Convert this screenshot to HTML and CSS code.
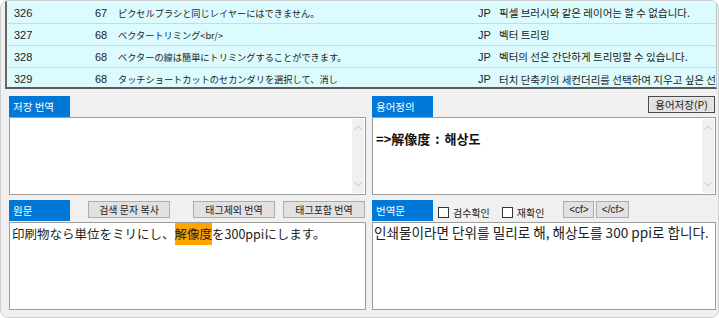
FILE: index.html
```html
<!DOCTYPE html>
<html>
	<head>
		<meta charset="UTF-8">
		<title>번역 편집기</title>
		<link rel="stylesheet" href="styles.css">
	</head>
	<body>
		<div class="window">
			<div class="seg-list">
				<div class="seg-row">
					<span class="c-no">326</span><span class="c-len">67</span>
					<span class="c-ja">ピクセルブラシと同じレイヤーにはできません。</span><span class="c-gap"></span>
					<span class="c-lang">JP</span><span class="c-ko">픽셀 브러시와 같은 레이어는 할 수 없습니다.</span>
				</div>
				<div class="seg-row">
					<span class="c-no">327</span><span class="c-len">68</span>
					<span class="c-ja">ベクタートリミング&lt;br/&gt;</span><span class="c-gap"></span>
					<span class="c-lang">JP</span><span class="c-ko">벡터 트리밍</span>
				</div>
				<div class="seg-row">
					<span class="c-no">328</span><span class="c-len">68</span>
					<span class="c-ja">ベクターの線は簡単にトリミングすることができます。</span><span class="c-gap"></span>
					<span class="c-lang">JP</span><span class="c-ko">벡터의 선은 간단하게 트리밍할 수 있습니다.</span>
				</div>
				<div class="seg-row last">
					<span class="c-no">329</span><span class="c-len">68</span>
					<span class="c-ja">タッチショートカットのセカンダリを選択して、消し</span><span class="c-gap"></span>
					<span class="c-lang">JP</span><span class="c-ko">터치 단축키의 세컨더리를 선택하여 지우고 싶은 선</span>
				</div>
			</div>

			<div class="panels">
				<!-- 저장 번역 -->
				<div class="panel">
					<div class="panel-head">
						<span class="tab">저장 번역</span>
					</div>
					<div class="box box-mid">
						<div class="box-text"></div>
						<div class="vscroll">
							<svg width="8" height="5" viewBox="0 0 8 5"><polyline points="0.5,4.5 4,1 7.5,4.5" fill="none" stroke="#c2c2c2" stroke-width="1"/></svg>
							<svg width="8" height="5" viewBox="0 0 8 5"><polyline points="0.5,0.5 4,4 7.5,0.5" fill="none" stroke="#c2c2c2" stroke-width="1"/></svg>
						</div>
					</div>
				</div>

				<!-- 용어정의 -->
				<div class="panel">
					<div class="panel-head">
						<span class="tab">용어정의</span>
						<button class="btn btn-default">용어저장(P)</button>
					</div>
					<div class="box box-mid">
						<div class="box-text term">=&gt;解像度 : 해상도</div>
						<div class="vscroll">
							<svg width="8" height="5" viewBox="0 0 8 5"><polyline points="0.5,4.5 4,1 7.5,4.5" fill="none" stroke="#c2c2c2" stroke-width="1"/></svg>
							<svg width="8" height="5" viewBox="0 0 8 5"><polyline points="0.5,0.5 4,4 7.5,0.5" fill="none" stroke="#c2c2c2" stroke-width="1"/></svg>
						</div>
					</div>
				</div>

				<!-- 원문 -->
				<div class="panel">
					<div class="panel-head head-low">
						<span class="tab">원문</span>
						<button class="btn btn-copy">검색 문자 복사</button>
						<button class="btn btn-notag">태그제외 번역</button>
						<button class="btn btn-tag">태그포함 번역</button>
					</div>
					<div class="box box-low">
						<div class="box-text src">印刷物なら単位をミリにし、<mark class="hit">解像度</mark>を300ppiにします。</div>
					</div>
				</div>

				<!-- 번역문 -->
				<div class="panel">
					<div class="panel-head head-low">
						<span class="tab">번역문</span>
						<label class="check"><span class="check-box"></span>검수확인</label>
						<label class="check check-2"><span class="check-box"></span>재확인</label>
						<button class="btn btn-cf">&lt;cf&gt;</button>
						<button class="btn btn-cf2">&lt;/cf&gt;</button>
					</div>
					<div class="box box-low">
						<div class="box-text dst">인쇄물이라면 단위를 밀리로 해, 해상도를 300 ppi로 합니다.</div>
					</div>
				</div>
			</div>
		</div>
	</body>
</html>
```

FILE: styles.css
```css
*{margin:0;padding:0;box-sizing:border-box;}
body{
	background:#fff;
	font-family:"Noto Sans CJK KR","Liberation Sans",sans-serif;
	color:#1e1e1e;
}
.window{
	width:719px;
	height:318px;
	border:1px solid #cfcfcf;
	border-radius:8px;
	background:#f0f0f0;
	overflow:hidden;
}

/* 세그먼트 목록 */
.seg-list{
	margin-left:4px;
	width:712px;
	height:88px;
	padding-top:1px;
	background:#dcfbfe;
	border-left:2px solid #696969;
	border-bottom:2px solid #5a5a5a;
	border-right:1px solid #b9c9cc;
	overflow:hidden;
}
.seg-row{
	display:grid;
	grid-template-columns:81px 23px 230px 130px 21px 1fr;
	align-items:center;
	height:22px;
	padding-left:7px;
	border-bottom:1px solid #c4dde2;
	white-space:nowrap;
	font-size:11px;
}
.seg-row.last{border-bottom:none;}
.seg-row span{overflow:hidden;}
.c-no,.c-len,.c-lang{
	font-family:"Liberation Sans",sans-serif;
	font-size:11px;
	color:#222;
}
.c-ja{
	font-family:"Noto Sans CJK JP",sans-serif;
	font-size:9.2px;
	color:#222;
}
.c-ko{
	font-family:"Noto Sans CJK KR",sans-serif;
	font-size:10.5px;
	color:#222;
}

/* 아래 패널 */
.panels{
	display:grid;
	grid-template-columns:357px 344px;
	column-gap:6px;
	row-gap:5px;
	padding-left:8px;
	margin-top:7px;
}
.panel{display:flex;flex-direction:column;}
.panel-head{
	display:flex;
	align-items:flex-start;
	height:21px;
}
.panel-head.head-low{height:22px;}
.tab{
	display:block;
	width:61px;
	height:21px;
	padding:3px 0 0 4px;
	background:#0078d7;
	color:#fff;
	font-size:10.5px;
	line-height:15px;
}
.btn{
	height:17px;
	margin-top:1px;
	background:#e1e1e1;
	border:1px solid #adadad;
	font-family:"Noto Sans CJK KR",sans-serif;
	font-size:10px;
	line-height:14px;
	color:#222;
}
.btn-default{
	margin:0 1px 0 auto;
	width:67px;
	font-size:10.5px;
	border-color:#4a4a4a;
	box-shadow:inset 0 0 0 1px #e8e8e8;
}
.btn-copy{width:82px;margin-left:18px;}
.btn-notag{width:82px;margin-left:23px;}
.btn-tag{width:82px;margin-left:8px;}
.btn-cf{width:31px;margin-left:19px;font-family:"Liberation Sans",sans-serif;}
.btn-cf2{width:33px;margin-left:2px;font-family:"Liberation Sans",sans-serif;}

.check{
	display:flex;
	align-items:center;
	height:12px;
	margin-top:6px;
	margin-left:5px;
	font-size:10px;
	color:#222;
}
.check-2{margin-left:12px;}
.check-box{
	width:11px;
	height:11px;
	border:1px solid #333;
	background:#fff;
	margin-right:4px;
}

.box{
	display:flex;
	background:#fff;
	border:1px solid #9d9d9d;
}
.box-mid{height:78px;}
.box-low{height:88px;}
.box-text{flex:1;overflow:hidden;white-space:nowrap;}
.vscroll{
	width:12px;
	margin:1px 1px 1px 0;
	background:#f0f0f0;
	display:flex;
	flex-direction:column;
	justify-content:space-between;
	align-items:center;
	padding:6px 0 6px;
}
.term{
	padding:11px 0 0 3px;
	font-weight:bold;
	font-size:13px;
	word-spacing:2px;
	color:#111;
}
.src{
	padding-left:2px;
	font-family:"Noto Sans CJK JP",sans-serif;
	font-size:12.5px;
	line-height:21px;
	color:#222;
}
.hit{
	display:inline-block;
	background:#ffa500;
	color:#222;
	line-height:22px;
}
.dst{
	padding-left:1px;
	font-family:"Noto Sans CJK KR",sans-serif;
	font-size:13.6px;
	line-height:19px;
	color:#222;
}
```
